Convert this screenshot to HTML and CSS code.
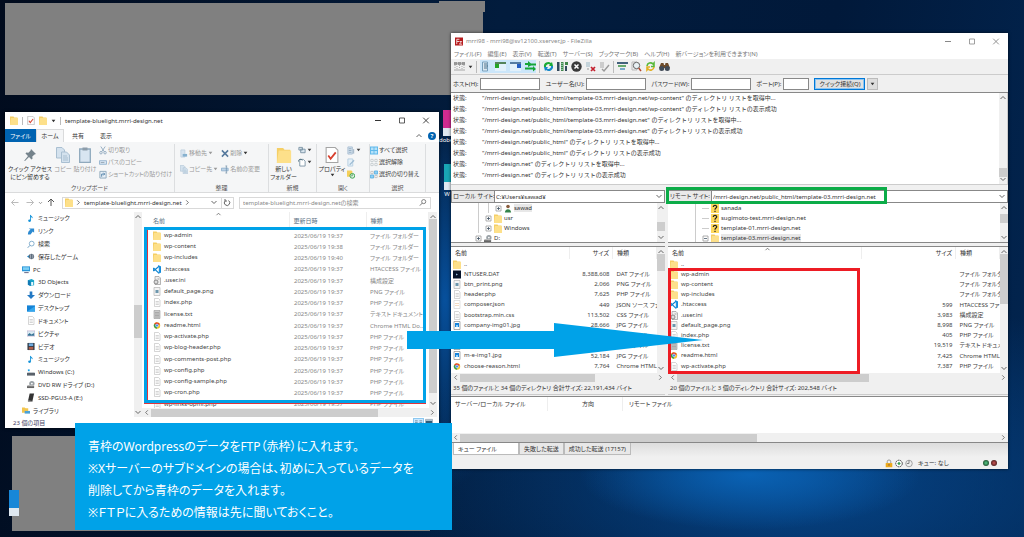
FILE: index.html
```html
<!DOCTYPE html>
<html lang="ja">
<head>
<meta charset="utf-8">
<title>FTP アップロード手順</title>
<link rel="stylesheet" href="styles.css">
</head>
<body>
<svg class="defs" aria-hidden="true">
  <symbol id="folder" viewBox="0 0 8 9"><path d="M0 .5h3.5l.8 1H7.500V9H0z" fill="#f5cf66"/><path d="M1 2h7v7H0z" fill="#fde08a"/></symbol>
  <symbol id="doc" viewBox="0 0 8 9"><path d="M1.500.5h4L7 2v6.500H1.500z" fill="#fff" stroke="#bbb" stroke-width=".6"/><path d="M2.600 3.500h3.200M2.600 5h3.200M2.600 6.500h3.200" stroke="#aaa" stroke-width=".5"/></symbol>
  <symbol id="txt" viewBox="0 0 8 9"><path d="M1 .5h6v8H1z" fill="#c9c9c9" stroke="#999" stroke-width=".6"/><path d="M2 2.500h4M2 4h4M2 5.500h4M2 7h4" stroke="#888" stroke-width=".5"/></symbol>
  <symbol id="png" viewBox="0 0 8 9"><path d="M1 .5h6v8H1z" fill="#f4f4f4" stroke="#aaa" stroke-width=".6"/><path d="M2.500 3h3v3h-3z" fill="#6d97ad"/></symbol>
  <symbol id="jpg" viewBox="0 0 8 9"><path d="M1 .5h6v8H1z" fill="#fff" stroke="#777" stroke-width=".6"/><path d="M2 2h4v4H2z" fill="#1683dc"/><path d="M3 4h2v2H3z" fill="#90d4ff"/></symbol>
  <symbol id="json" viewBox="0 0 8 9"><path d="M1 .5h6v8H1z" fill="#fff" stroke="#ccc" stroke-width=".6"/><path d="M3 3v4M5 3v4" stroke="#e0a468" stroke-width=".8" stroke-dasharray="1"/></symbol>
  <symbol id="ini" viewBox="0 0 8 9"><path d="M2 .5h4L7.500 2v6.500H2z" fill="#eee" stroke="#888" stroke-width=".6"/><circle cx="3" cy="6" r="2" fill="#ddd" stroke="#777" stroke-width=".8"/><path d="M4.500 3h2" stroke="#777" stroke-width=".6"/></symbol>
  <symbol id="code" viewBox="0 0 9 9"><path d="M6.500.5 8.500 1.500v6L6.500 8.500 1 3.200.3 3.800v1.500L1 5.900 6.500 1z" fill="none" stroke="#0b83d0" stroke-width="1.300"/><path d="M6.500.5 8.500 1.500v6L6.500 8.500z" fill="#1e94e4"/></symbol>
  <symbol id="chrome" viewBox="0 0 9 9"><circle cx="4.500" cy="4.500" r="3.600" fill="#f4c430"/><path d="M1.400 2.700A3.600 3.600 0 0 1 7.700 3L4.500 4.500z" fill="#df3e30"/><path d="M1.400 2.700A3.600 3.600 0 0 0 4.500 8.100L5 4.500z" fill="#2f9d50"/><circle cx="4.500" cy="4.500" r="1.600" fill="#4285f4" stroke="#fff" stroke-width=".6"/></symbol>
  <symbol id="dat" viewBox="0 0 8 8"><path d="M0 0h8v8H0z" fill="#06142a"/><path d="m3 3 2 1-2 1z" fill="#9bd"/></symbol>
  <symbol id="music" viewBox="0 0 9 9"><path d="M4 .5v6" stroke="#1191d8" stroke-width="1"/><path d="M4 .3c.5 1.700 3 1.800 2.300 4.200C6 3.500 5 3 4 3z" fill="#1191d8"/><ellipse cx="2.900" cy="7" rx="1.600" ry="1.300" fill="#1191d8"/></symbol>
  <symbol id="link" viewBox="0 0 9 9"><path d="M2 1h6v5L6.500 4.500 4 8H1c0-3 1-4.500 3-5.500z" fill="#2c8ad0"/></symbol>
  <symbol id="search" viewBox="0 0 9 9"><circle cx="5.300" cy="3.500" r="2.700" fill="none" stroke="#6d9fc4" stroke-width=".9"/><path d="M3.300 5.500.8 8.200" stroke="#6d9fc4" stroke-width="1.100"/></symbol>
  <symbol id="find" viewBox="0 0 9 9"><circle cx="5.300" cy="3.500" r="2.300" fill="none" stroke="#555" stroke-width=".8"/><path d="M3.600 5.200 1 8" stroke="#555" stroke-width=".9"/></symbol>
  <symbol id="game" viewBox="0 0 9 9"><path d="M0 4.500 3 2.500v4z" fill="#1b7fc3"/><circle cx="5" cy="4.500" r="3" fill="#5c6c79"/><path d="M4 2v5M6.500 2v5" stroke="#dde" stroke-width=".6"/></symbol>
  <symbol id="pc" viewBox="0 0 9 9"><path d="M0 1h9v5.500H0z" fill="#2994d8"/><path d="M1 2h7v3H1z" fill="#7dd0f5"/><path d="M2.500 8h5" stroke="#557" stroke-width="1"/></symbol>
  <symbol id="cube" viewBox="0 0 9 9"><path d="m1 2 4-1.500L8 2v5.500L4 8.500 1 7z" fill="#18a4c9"/><path d="M1 2 4 3v5.500L1 7z" fill="#1479b4"/><path d="M4.700 4H7v3.500L4.700 8z" fill="#eaf9ff"/></symbol>
  <symbol id="down" viewBox="0 0 9 9"><path d="M3 0h3v4h3L4.500 8.500 0 4h3z" fill="#2379c4"/></symbol>
  <symbol id="desk" viewBox="0 0 9 9"><path d="M0 1h9v7H0z" fill="#1583d6"/><path d="m0 8 9-6v6z" fill="#35a8ee"/></symbol>
  <symbol id="pict" viewBox="0 0 9 9"><path d="M0 1.500h9v6H0z" fill="#dbeaf2" stroke="#859" stroke-width=".3"/><path d="M1 5.500 3 4l2 1.500L8 4v3H1z" fill="#3b7698"/></symbol>
  <symbol id="video" viewBox="0 0 9 9"><path d="M.5.5h8v8h-8z" fill="#333b46"/><path d="M2 1h5v3H2z" fill="#6eaade"/><path d="M2 5h5v3H2z" fill="#ae5d48"/></symbol>
  <symbol id="drive" viewBox="0 0 9 9"><path d="M0 5h9v3H0z" fill="#59616a"/><path d="M1 1h2v2H1z" fill="#19a0ea"/><path d="M1 4h7l1 1H0z" fill="#c3c8cc"/></symbol>
  <symbol id="dvd" viewBox="0 0 9 9"><path d="M0 6h8v2.500H0z" fill="#666"/><circle cx="5.500" cy="3.500" r="3" fill="#9aa1a6"/><circle cx="5.500" cy="3.500" r="1" fill="#fff"/><path d="M1 5h7v1.500H0z" fill="#bbb"/></symbol>
  <symbol id="ssd" viewBox="0 0 9 9"><path d="M3 0h5L6 9H1z" fill="#333"/><path d="m1 8 5 1" stroke="#999"/></symbol>
  <symbol id="lib" viewBox="0 0 9 9"><path d="M0 1h3l1 1h3v5H0z" fill="#f3c64f"/><path d="M3 5h6v3H3z" fill="#4ba2d6"/></symbol>
  <symbol id="pin" viewBox="0 0 12 12"><path d="m7 0 5 5-1.500.4-2.200 2.200.2 2.200-1 .7L5 7.900 1 12l-.8-.3L4 7 1.500 4.500l.7-1 2.200.2L6.600 1.500z" fill="#75838c"/></symbol>
  <symbol id="copy" viewBox="0 0 14 16"><path d="M.5.5H6L8.500 3v8h-8z" fill="#d4e2ee" stroke="#a9bfd1"/><path d="M5.500 5h5L13.500 8v7.500h-8z" fill="#d4e2ee" stroke="#a9bfd1"/><path d="M7 9h4M7 11h5M7 13h5" stroke="#a9bfd1"/></symbol>
  <symbol id="paste" viewBox="0 0 12 16"><path d="M.7 2h10.600v13.300H.7z" fill="#d8e5f1" stroke="#8fa9bd" stroke-width="1.300"/><path d="M3.500.5h5v3h-5z" fill="#8d9daa"/></symbol>
  <symbol id="cut" viewBox="0 0 9 9"><path d="m2 0 4 6M7 0 3 6" stroke="#8fa8bd" stroke-width="1"/><circle cx="2.200" cy="7" r="1.400" fill="none" stroke="#8fa8bd"/><circle cx="6.800" cy="7" r="1.400" fill="none" stroke="#8fa8bd"/></symbol>
  <symbol id="path" viewBox="0 0 9 9"><path d="M.5 2.500h8v4h-8z" fill="#dbe8f3" stroke="#8fb0cc"/><path d="m2 5 1-1 1 1 1-1 1 1" stroke="#567" stroke-width=".6" fill="none"/></symbol>
  <symbol id="short" viewBox="0 0 9 9"><path d="M1 1h7v7.500H1z" fill="#e8f0f7" stroke="#8ba5b9"/><path d="M3 7V4h3M5 2.500 6.500 4 5 5.500" stroke="#4c7da5" fill="none"/></symbol>
  <symbol id="move" viewBox="0 0 9 9"><path d="M1 .5h4.500v8H1z" fill="#d8e4ef" stroke="#c2d2e0"/><path d="M3 5h5v3H3z" fill="#86b1cf"/></symbol>
  <symbol id="del" viewBox="0 0 9 9"><path d="m1 1 7 7M8 1 1 8" stroke="#56799d" stroke-width="1.700"/></symbol>
  <symbol id="ren" viewBox="0 0 9 9"><path d="M.5 3h7.500v3H.5z" fill="#bed4e8" stroke="#8fb0cc"/><path d="M6 .5v8M5 .5h2M5 8.500h2" stroke="#64859f" stroke-width=".7"/></symbol>
  <symbol id="newitem" viewBox="0 0 9 9"><path d="M1 1h4v3H1zM3 3h5v4H3z" fill="#d9e5ee" stroke="#7890a2"/></symbol>
  <symbol id="easy" viewBox="0 0 9 9"><path d="M2 1h4l2 2v5.500H2z" fill="#fff" stroke="#7890a2"/><path d="M0 4c0-3 3-4 5-2" fill="none" stroke="#467"/></symbol>
  <symbol id="check" viewBox="0 0 12 15"><path d="M.5.5H9L11.500 3v11.500H.5z" fill="#fff" stroke="#a4a4a4"/><path d="m2.500 8 2.200 3L9.500 5" fill="none" stroke="#d8402e" stroke-width="1.700"/></symbol>
  <symbol id="open" viewBox="0 0 9 9"><path d="M1 .5h5v8H1z" fill="#d5e3ef" stroke="#a8bed2"/><path d="M2 2.500h3M2 4.500h3M2 6.500h3M7.500 3v5" stroke="#8fa8bd"/></symbol>
  <symbol id="edit" viewBox="0 0 9 9"><path d="M1 .5h5.500v8H1z" fill="#e5f0f8" stroke="#b5cde0"/><path d="m3 7 5-5" stroke="#9dbbd3" stroke-width="1.300"/></symbol>
  <symbol id="hist" viewBox="0 0 9 9"><path d="M0 0h5l1 1v6H0z" fill="#f5cf5a"/><circle cx="6" cy="6" r="2.700" fill="#dbefdc" stroke="#34a04a"/><path d="M6 4v2H4.500" stroke="#274" stroke-width=".6" fill="none"/></symbol>
  <symbol id="selall" viewBox="0 0 9 9"><path d="M0 0h9v9H0z" fill="#5fb8ea"/><path d="M1 1h3v3H1zM5 1h3v3H5zM1 5h3v3H1zM5 5h3v3H5z" fill="#b5e2fa"/></symbol>
  <symbol id="selnone" viewBox="0 0 9 9"><path d="M1 1h2.500v2.500H1zM5.500 1H8v2.500H5.500zM1 5.500h2.500V8H1zM5.500 5.500H8V8H5.500z" fill="#fff" stroke="#b9bfc4" stroke-width=".8"/></symbol>
  <symbol id="selinv" viewBox="0 0 9 9"><path d="M5 .5h3.500V4H5zM.5 5H4v3.500H.5z" fill="#8fd0f4" stroke="#49a7df" stroke-width=".8"/><path d="M1 1h2.500v2.500H1zM5.500 5.500H8V8H5.500z" fill="#fff" stroke="#aaa" stroke-width=".7"/></symbol>
  <symbol id="up" viewBox="0 0 8 5"><path d="m1.500 4 2.500-2.500L6.500 4" fill="none" stroke="#666"/></symbol>
  <symbol id="dn" viewBox="0 0 8 5"><path d="m1.500 1 2.500 2.500L6.500 1" fill="none" stroke="#666"/></symbol>
  <symbol id="lf" viewBox="0 0 5 8"><path d="M4 1.500 1.500 4 4 6.500" fill="none" stroke="#666"/></symbol>
  <symbol id="rt" viewBox="0 0 5 8"><path d="M1 1.500 3.500 4 1 6.500" fill="none" stroke="#666"/></symbol>
  <symbol id="arl" viewBox="0 0 8 8"><path d="M7.500 4h-7M3.500 1 .5 4l3 3" fill="none" stroke="currentColor"/></symbol>
  <symbol id="arr" viewBox="0 0 8 8"><path d="M.5 4h7M4.500 1l3 3-3 3" fill="none" stroke="currentColor"/></symbol>
  <symbol id="aru" viewBox="0 0 8 8"><path d="M4 7.500v-7M1 3.500l3-3 3 3" fill="none" stroke="#555"/></symbol>
  <symbol id="reload" viewBox="0 0 8 8"><path d="M5.500 2A2.700 2.700 0 1 1 2 2.500M2 .5v2h2" fill="none" stroke="#555" stroke-width=".9"/></symbol>
  <symbol id="min" viewBox="0 0 8 8"><path d="M1 4h6" stroke="currentColor"/></symbol>
  <symbol id="max" viewBox="0 0 8 8"><path d="M1.500 1.500h5v5h-5z" fill="none" stroke="currentColor" stroke-width=".8"/></symbol>
  <symbol id="close" viewBox="0 0 8 8"><path d="m1.200 1.200 5.600 5.600M6.800 1.200 1.200 6.800" stroke="currentColor" stroke-width=".9"/></symbol>
  <symbol id="tri" viewBox="0 0 6 4"><path d="M.8.5h4.400L3 3.500z" fill="currentColor"/></symbol>
  <symbol id="fz" viewBox="0 0 9 9"><path d="M0 0h9v9H0z" fill="#b5191b"/><path d="M2 7.500V2h3M2 4.500h2.500M5 4.500h2.500L5 7.500h3" fill="none" stroke="#fff" stroke-width=".9"/></symbol>
  <symbol id="site" viewBox="0 0 11 11"><path d="M0 1.500h3v2H0zM4 1.500h3v2H4zM8 1.500h3v2H8zM0 9h11" fill="#999" stroke="#888" stroke-width=".7"/><path d="M1 4v4M3 5v3M5.500 4v4M8 5v3M10 4v4" stroke="#aaa" stroke-dasharray="1"/></symbol>
  <symbol id="tlog" viewBox="0 0 11 11"><path d="M2.500 1h5v9h-5z" fill="#dbe8f1" stroke="#78a0bc"/><path d="M4 3h3M4 5h4M4 7h3" stroke="#4f758e"/></symbol>
  <symbol id="tlocal" viewBox="0 0 11 11"><path d="M0 1h11v9H0z" fill="#e2f1fb"/><path d="M0 1h11v2H0z" fill="#54835a"/><path d="M0 3h4v4H0z" fill="#24a527"/></symbol>
  <symbol id="tremote" viewBox="0 0 11 11"><path d="M0 1h11v9H0z" fill="#e2f1fb"/><path d="M0 1h11v2H0z" fill="#567da2"/><path d="M7 3h4v4H7z" fill="#245fc4"/></symbol>
  <symbol id="tqueue" viewBox="0 0 11 11"><path d="M3 0v2H0v2h3v2l3-1.500h5v-2H6zM8 5v1.500H0v2h8v2L11 8z" fill="#16a637"/></symbol>
  <symbol id="tref" viewBox="0 0 11 11"><path d="M1 6a4.300 4.300 0 0 1 7-4l1-1 1 4H6l1-1.400A2.500 2.500 0 0 0 3 6z" fill="#1cab36"/><path d="M10 5a4.300 4.300 0 0 1-7 4l-1 1-1-4h4L4 7.400A2.500 2.500 0 0 0 8 5z" fill="#1688c9"/></symbol>
  <symbol id="tproc" viewBox="0 0 11 11"><path d="M0 1h2.500v9H0zM8 5h2v5H8z" fill="#31495b"/><path d="M4 1h2.500v9H4zM8 1h3v3H8z" fill="#41864a"/><path d="M5 2v7" stroke="#cfe" stroke-dasharray="1"/></symbol>
  <symbol id="tcancel" viewBox="0 0 11 11"><circle cx="5.500" cy="5.500" r="5.200" fill="#3a3a3a"/><path d="m3.500 3.500 4 4M7.500 3.500l-4 4" stroke="#fff" stroke-width="1.500"/></symbol>
  <symbol id="tdisc" viewBox="0 0 11 11"><path d="M1 1h4v5H1z" fill="#c5d4db"/><path d="M2 8h2" stroke="#999"/><path d="m6 6 4 4M10 6l-4 4" stroke="#c3202e" stroke-width="1.700"/></symbol>
  <symbol id="trecon" viewBox="0 0 11 11"><path d="M1 1h4v6H1z" fill="#ccc"/><path d="m3 8 2 2 5-6" fill="none" stroke="#999" stroke-width="1.400"/></symbol>
  <symbol id="tfilter" viewBox="0 0 11 11"><path d="M0 1h11v2H0z" fill="#43617c"/><path d="M1 4h8v2H1z" fill="#66a96d"/><path d="M3 7h5v2H3z" fill="#79a9c9"/></symbol>
  <symbol id="tcomp" viewBox="0 0 11 11"><path d="M1 1h5v8H1z" fill="#eee" stroke="#bbb"/><circle cx="5.500" cy="4.500" r="3.200" fill="#e8f0f3" stroke="#666"/><path d="m7.700 7 2.300 3" stroke="#b4492f" stroke-width="1.500"/></symbol>
  <symbol id="tsync" viewBox="0 0 11 11"><path d="M2 5a3.500 3.500 0 0 1 6-2l1-1v3.500H6" fill="none" stroke="#59b93a" stroke-width="1.600"/><path d="M9 6a3.500 3.500 0 0 1-6 2L2 9V6h3" fill="none" stroke="#e1af21" stroke-width="1.600"/></symbol>
  <symbol id="tbin" viewBox="0 0 11 11"><path d="M2 2h2.500l.5 2h1l.5-2H9l2 5H0z" fill="#6d4b2a"/><circle cx="2.700" cy="7.500" r="2.500" fill="#414b57"/><circle cx="8.300" cy="7.500" r="2.500" fill="#414b57"/></symbol>
  <symbol id="user" viewBox="0 0 9 9"><circle cx="4.500" cy="2.300" r="2" fill="#8a5d3e"/><path d="M1 9c0-5 7-5 7 0z" fill="#35844b"/></symbol>
  <symbol id="what" viewBox="0 0 8 9"><path d="M0 0h8v9H0z" fill="#ffd95c"/><path d="M2.300 3c0-2.300 3.700-2 3.400 0C5.600 4.200 4 4 4 5.700M4 6.700v1.200" fill="none" stroke="#222" stroke-width="1.200"/></symbol>
  <symbol id="plus" viewBox="0 0 7 7"><path d="M1 1h5v5H1z" fill="#fff" stroke="#999" stroke-width=".8"/><path d="M2 3.500h3M3.500 2v3" stroke="#456" stroke-width=".8"/></symbol>
  <symbol id="minus" viewBox="0 0 7 7"><path d="M1 1h5v5H1z" fill="#fff" stroke="#999" stroke-width=".8"/><path d="M2 3.500h3" stroke="#456" stroke-width=".8"/></symbol>
  <symbol id="lock" viewBox="0 0 9 9"><path d="M2.500 4V2.500a2 2 0 0 1 4 0V4" fill="none" stroke="#999" stroke-width="1.100"/><path d="M.8 4h7.400v4.700H.8z" fill="#eda918"/><path d="M4.500 5v2" stroke="#755"/></symbol>
  <symbol id="gear" viewBox="0 0 9 9"><circle cx="4.500" cy="4.500" r="3.700" fill="#fff" stroke="#333" stroke-width="1" stroke-dasharray="2 .6"/><path d="m2.500 4.500 2-2 2 2-2 2z" fill="#3a9c50"/></symbol>
  <symbol id="clock" viewBox="0 0 9 9"><circle cx="4.500" cy="4.500" r="3.700" fill="#eee" stroke="#999"/><path d="M4.500 1v3.500H2" fill="none" stroke="#777"/></symbol>
  <symbol id="vlist" viewBox="0 0 9 8"><path d="M0 1h3M0 3h3M0 5h3M0 7h3M5 1h3M5 3h3M5 5h3M5 7h3" stroke="#53788d" stroke-width=".8"/></symbol>
  <symbol id="vbig" viewBox="0 0 9 8"><path d="M.5.5h8v7h-8z" fill="#d6e5ed" stroke="#9ab"/><path d="M1 2h7v3H1z" fill="#315d7a"/></symbol>
</svg>

<main class="desktop">
  <div class="mask mask-top"></div>
  <div class="mask mask-bump"></div>
  <div class="mask mask-bottom"></div>
  <div class="shortcut adobe"><span class="tile pink"></span><span>dobe</span></div>
  <div class="shortcut web"><span class="tile teal"></span><span>W</span></div>
  <div class="shortcut edge-icon"><span class="tile blue"></span></div>

  <section class="window explorer" aria-label="エクスプローラー">
    <header class="ex-title">
      <svg class="i8"><use href="#folder"/></svg><i class="bar"></i>
      <svg class="i8"><use href="#check"/></svg>
      <svg class="i8"><use href="#folder"/></svg>
      <svg class="caret"><use href="#tri"/></svg><i class="bar"></i>
      <span>template-bluelight.mrri-design.net</span>
      <div class="controls"><button aria-label="最小化"><svg class="i8"><use href="#min"/></svg></button><button aria-label="最大化"><svg class="i8"><use href="#max"/></svg></button><button aria-label="閉じる"><svg class="i8"><use href="#close"/></svg></button></div>
    </header>
    <nav class="ex-tabs">
      <button class="file">ファイル</button><button class="on">ホーム</button><button>共有</button><button>表示</button>
      <div class="tab-end"><svg class="chev"><use href="#up"/></svg><button class="help" aria-label="ヘルプ">?</button></div>
    </nav>
    <div class="ribbon">
      <div class="group g-clip">
        <div class="tools">
          <button class="big w-pin"><svg class="i12"><use href="#pin"/></svg>クイック アクセス<br>にピン留めする</button>
          <button class="big dim w-copy"><svg class="i16"><use href="#copy"/></svg>コピー</button>
          <button class="big dim w-paste"><svg class="i16"><use href="#paste"/></svg>貼り付け</button>
          <div class="stack dim"><button><svg class="i8"><use href="#cut"/></svg>切り取り</button><button><svg class="i8"><use href="#path"/></svg>パスのコピー</button><button><svg class="i8"><use href="#short"/></svg>ショートカットの貼り付け</button></div>
        </div><div class="label">クリップボード</div>
      </div>
      <div class="group g-org">
        <div class="tools two">
          <div class="stack dim"><button><svg class="i8"><use href="#move"/></svg>移動先<svg class="caret"><use href="#tri"/></svg></button><button><svg class="i8"><use href="#copy"/></svg>コピー先<svg class="caret"><use href="#tri"/></svg></button></div>
          <div class="stack dim"><button><svg class="i8"><use href="#del"/></svg>削除<svg class="caret dark"><use href="#tri"/></svg></button><button><svg class="i8"><use href="#ren"/></svg>名前の変更</button></div>
        </div><div class="label">整理</div>
      </div>
      <div class="group g-new">
        <div class="tools"><button class="big w-new"><svg class="i16"><use href="#folder"/></svg>新しい<br>フォルダー</button>
          <div class="stack"><button aria-label="新しいアイテム"><svg class="i8"><use href="#newitem"/></svg><svg class="caret"><use href="#tri"/></svg></button><button aria-label="ショートカット"><svg class="i8"><use href="#easy"/></svg><svg class="caret"><use href="#tri"/></svg></button></div>
        </div><div class="label">新規</div>
      </div>
      <div class="group g-open">
        <div class="tools"><button class="big w-prop"><svg class="i16"><use href="#check"/></svg>プロパティ<svg class="caret"><use href="#tri"/></svg></button>
          <div class="stack"><button class="dim" aria-label="開く"><svg class="i8"><use href="#open"/></svg><svg class="caret"><use href="#tri"/></svg></button><button aria-label="編集"><svg class="i8"><use href="#edit"/></svg></button><button aria-label="履歴"><svg class="i8"><use href="#hist"/></svg></button></div>
        </div><div class="label">開く</div>
      </div>
      <div class="group g-sel">
        <div class="tools"><div class="stack"><button><svg class="i8"><use href="#selall"/></svg>すべて選択</button><button><svg class="i8"><use href="#selnone"/></svg>選択解除</button><button><svg class="i8"><use href="#selinv"/></svg>選択の切り替え</button></div></div>
        <div class="label">選択</div>
      </div>
    </div>
    <div class="address">
      <div class="hist"><svg class="i8"><use href="#arl"/></svg><svg class="i8"><use href="#arr"/></svg><svg class="caret"><use href="#dn"/></svg><svg class="i8 dark"><use href="#aru"/></svg></div>
      <div class="path"><svg class="i8"><use href="#folder"/></svg><svg class="side"><use href="#rt"/></svg><span>template-bluelight.mrri-design.net</span><svg class="side"><use href="#rt"/></svg><svg class="chev push"><use href="#dn"/></svg><button class="reload" aria-label="更新"><svg class="i8"><use href="#reload"/></svg></button></div>
      <label class="find"><input aria-label="検索" placeholder="template-bluelight.mrri-design.netの検索"><svg class="i8"><use href="#find"/></svg></label>
    </div>
    <div class="ex-body">
      <ul class="tree">
        <li><svg class="i8"><use href="#music"/></svg>ミュージック</li>
        <li><svg class="i8"><use href="#link"/></svg>リンク</li>
        <li><svg class="i8"><use href="#search"/></svg>検索</li>
        <li><svg class="i8"><use href="#game"/></svg>保存したゲーム</li>
        <li class="root"><svg class="i8"><use href="#pc"/></svg>PC</li>
        <li><svg class="i8"><use href="#cube"/></svg>3D Objects</li>
        <li><svg class="i8"><use href="#down"/></svg>ダウンロード</li>
        <li><svg class="i8"><use href="#desk"/></svg>デスクトップ</li>
        <li><svg class="i8"><use href="#doc"/></svg>ドキュメント</li>
        <li><svg class="i8"><use href="#pict"/></svg>ピクチャ</li>
        <li><svg class="i8"><use href="#video"/></svg>ビデオ</li>
        <li><svg class="i8"><use href="#music"/></svg>ミュージック</li>
        <li><svg class="i8"><use href="#drive"/></svg>Windows (C:)</li>
        <li><svg class="i8"><use href="#dvd"/></svg>DVD RW ドライブ (D:)</li>
        <li><svg class="i8"><use href="#ssd"/></svg>SSD-PGU3-A (E:)</li>
        <li class="root"><svg class="i8"><use href="#lib"/></svg>ライブラリ</li>
      </ul>
      <div class="vbar nav-bar"><svg><use href="#up"/></svg><i></i><svg><use href="#dn"/></svg></div>
      <div class="pane">
        <div class="listing">
          <div class="clip">
          <table class="files">
            <colgroup><col class="c-name"><col class="c-date"><col></colgroup>
            <thead><tr><th>名前<svg class="sort"><use href="#up"/></svg></th><th>更新日時</th><th>種類</th></tr></thead>
            <tbody>
            <tr><td><svg class="i8"><use href="#folder"/></svg>wp-admin</td><td>2025/06/19 19:37</td><td>ファイル フォルダー</td></tr>
            <tr><td><svg class="i8"><use href="#folder"/></svg>wp-content</td><td>2025/06/19 19:38</td><td>ファイル フォルダー</td></tr>
            <tr><td><svg class="i8"><use href="#folder"/></svg>wp-includes</td><td>2025/06/19 19:40</td><td>ファイル フォルダー</td></tr>
            <tr><td><svg class="i8"><use href="#code"/></svg>.htaccess</td><td>2025/06/19 19:37</td><td>HTACCESS ファイル</td></tr>
            <tr><td><svg class="i8"><use href="#ini"/></svg>.user.ini</td><td>2025/06/19 19:37</td><td>構成設定</td></tr>
            <tr><td><svg class="i8"><use href="#png"/></svg>default_page.png</td><td>2025/06/19 19:37</td><td>PNG ファイル</td></tr>
            <tr><td><svg class="i8"><use href="#doc"/></svg>index.php</td><td>2025/06/19 19:37</td><td>PHP ファイル</td></tr>
            <tr><td><svg class="i8"><use href="#txt"/></svg>license.txt</td><td>2025/06/19 19:37</td><td>テキスト ドキュメント</td></tr>
            <tr><td><svg class="i8"><use href="#chrome"/></svg>readme.html</td><td>2025/06/19 19:37</td><td>Chrome HTML Do...</td></tr>
            <tr><td><svg class="i8"><use href="#doc"/></svg>wp-activate.php</td><td>2025/06/19 19:37</td><td>PHP ファイル</td></tr>
            <tr><td><svg class="i8"><use href="#doc"/></svg>wp-blog-header.php</td><td>2025/06/19 19:37</td><td>PHP ファイル</td></tr>
            <tr><td><svg class="i8"><use href="#doc"/></svg>wp-comments-post.php</td><td>2025/06/19 19:37</td><td>PHP ファイル</td></tr>
            <tr><td><svg class="i8"><use href="#doc"/></svg>wp-config.php</td><td>2025/06/19 19:37</td><td>PHP ファイル</td></tr>
            <tr><td><svg class="i8"><use href="#doc"/></svg>wp-config-sample.php</td><td>2025/06/19 19:37</td><td>PHP ファイル</td></tr>
            <tr><td><svg class="i8"><use href="#doc"/></svg>wp-cron.php</td><td>2025/06/19 19:37</td><td>PHP ファイル</td></tr>
            <tr><td><svg class="i8"><use href="#doc"/></svg>wp-links-opml.php</td><td>2025/06/19 19:37</td><td>PHP ファイル</td></tr>
            </tbody>
          </table>
          </div>
          <div class="vbar list-bar"><svg><use href="#up"/></svg><i></i><svg><use href="#dn"/></svg></div>
        </div>
        <div class="hbar ex-h"><svg><use href="#lf"/></svg><i></i><svg><use href="#rt"/></svg></div>
      </div>
    </div>
    <footer class="ex-foot"><span>23 個の項目</span><button class="view on" aria-label="詳細"><svg class="i8"><use href="#vlist"/></svg></button><button class="view" aria-label="大アイコン"><svg class="i8"><use href="#vbig"/></svg></button></footer>
  </section>

  <section class="window zilla" aria-label="FileZilla">
    <header class="fz-title"><svg class="i8"><use href="#fz"/></svg><span>mrri98 - mrri98@sv12100.xserver.jp - FileZilla</span>
      <div class="controls"><button aria-label="最小化"><svg class="i8"><use href="#min"/></svg></button><button aria-label="最大化"><svg class="i8"><use href="#max"/></svg></button><button aria-label="閉じる"><svg class="i8"><use href="#close"/></svg></button></div></header>
    <nav class="menu"><button>ファイル(F)</button><button>編集(E)</button><button>表示(V)</button><button>転送(T)</button><button>サーバー(S)</button><button>ブックマーク(B)</button><button>ヘルプ(H)</button><button>新バージョンを利用できます!(N)</button></nav>
    <div class="toolbar">
      <button aria-label="サイト"><svg><use href="#site"/></svg></button><svg class="caret"><use href="#tri"/></svg><i class="bar"></i>
      <div class="pressed"><button aria-label="ログ"><svg><use href="#tlog"/></svg></button><button aria-label="ローカル"><svg><use href="#tlocal"/></svg></button><button aria-label="リモート"><svg><use href="#tremote"/></svg></button><button aria-label="キュー"><svg><use href="#tqueue"/></svg></button></div><i class="bar"></i>
      <button aria-label="更新"><svg><use href="#tref"/></svg></button><button aria-label="処理"><svg><use href="#tproc"/></svg></button><button aria-label="中止"><svg><use href="#tcancel"/></svg></button><button aria-label="切断"><svg><use href="#tdisc"/></svg></button><button aria-label="再接続"><svg><use href="#trecon"/></svg></button><i class="bar"></i>
      <button aria-label="フィルター"><svg><use href="#tfilter"/></svg></button><button aria-label="比較"><svg><use href="#tcomp"/></svg></button><button aria-label="同期"><svg><use href="#tsync"/></svg></button><button aria-label="検索"><svg><use href="#tbin"/></svg></button>
    </div>
    <form class="quick">
      <label for="h">ホスト(H):</label><input id="h" class="wide"><label for="u">ユーザー名(U):</label><input id="u" class="wide"><label for="p">パスワード(W):</label><input id="p" type="password" class="wide"><label for="o">ポート(P):</label><input id="o" class="port">
      <button type="button" class="go">クイック接続(Q)</button><button type="button" class="drop" aria-label="履歴"><svg class="caret"><use href="#tri"/></svg></button>
    </form>
    <div class="log">
      <dl>
        <dt>状態:</dt><dd>"/mrri-design.net/public_html/template-03.mrri-design.net/wp-content" <b>のディレクトリ リストを取得中...</b></dd>
        <dt>状態:</dt><dd>"/mrri-design.net/public_html/template-03.mrri-design.net/wp-content" <b>のディレクトリ リストの表示成功</b></dd>
        <dt>状態:</dt><dd>"/mrri-design.net/public_html/template-03.mrri-design.net" <b>のディレクトリ リストを取得中...</b></dd>
        <dt>状態:</dt><dd>"/mrri-design.net/public_html/template-03.mrri-design.net" <b>のディレクトリ リストの表示成功</b></dd>
        <dt>状態:</dt><dd>"/mrri-design.net/public_html" <b>のディレクトリ リストを取得中...</b></dd>
        <dt>状態:</dt><dd>"/mrri-design.net/public_html" <b>のディレクトリ リストの表示成功</b></dd>
        <dt>状態:</dt><dd>"/mrri-design.net" <b>のディレクトリ リストを取得中...</b></dd>
        <dt>状態:</dt><dd>"/mrri-design.net" <b>のディレクトリ リストの表示成功</b></dd>
      </dl>
      <div class="vbar log-bar"><svg><use href="#up"/></svg><i></i><svg><use href="#dn"/></svg></div>
    </div>
    <div class="split">
      <div class="side-pane local">
        <div class="site"><label for="ls">ローカル サイト:</label><input id="ls" value="C:¥Users¥sawad¥"><svg class="chev"><use href="#dn"/></svg></div>
        <div class="dirs"><ul>
          <li class="d3"><svg class="pm"><use href="#plus"/></svg><svg class="i8"><use href="#user"/></svg><span class="sel">sawad</span></li>
          <li class="d2"><svg class="pm"><use href="#plus"/></svg><svg class="i8"><use href="#folder"/></svg><span>usr</span></li>
          <li class="d2"><svg class="pm"><use href="#plus"/></svg><svg class="i8"><use href="#folder"/></svg><span>Windows</span></li>
          <li class="d1"><svg class="pm"><use href="#plus"/></svg><svg class="i8"><use href="#dvd"/></svg><span>D:</span></li>
        </ul><div class="vbar dir-bar"><svg><use href="#up"/></svg><i></i><svg><use href="#dn"/></svg></div></div>
        <div class="box">
          <div class="listing"><div class="clip"><table class="ftp">
            <colgroup><col><col class="c-size"><col class="c-type"></colgroup>
            <thead><tr><th>名前</th><th>サイズ</th><th>種類</th></tr></thead>
            <tbody>
            <tr><td><svg class="i8"><use href="#folder"/></svg>..</td><td></td><td></td></tr>
            <tr><td><svg class="i8"><use href="#dat"/></svg>NTUSER.DAT</td><td>8,388,608</td><td>DAT ファイル</td></tr>
            <tr><td><svg class="i8"><use href="#png"/></svg>btn_print.png</td><td>2,066</td><td>PNG ファイル</td></tr>
            <tr><td><svg class="i8"><use href="#doc"/></svg>header.php</td><td>7,625</td><td>PHP ファイル</td></tr>
            <tr><td><svg class="i8"><use href="#json"/></svg>composer.json</td><td>449</td><td>JSON ソース ファ</td></tr>
            <tr><td><svg class="i8"><use href="#doc"/></svg>bootstrap.min.css</td><td>113,502</td><td>CSS ファイル</td></tr>
            <tr><td><svg class="i8"><use href="#jpg"/></svg>company-img01.jpg</td><td>28,666</td><td>JPG ファイル</td></tr>
            <tr><td><svg class="i8"><use href="#jpg"/></svg>company-img02.jpg</td><td>28,120</td><td>JPG ファイル</td></tr>
            <tr><td><svg class="i8"><use href="#jpg"/></svg>company-img03.jpg</td><td>30,412</td><td>JPG ファイル</td></tr>
            <tr><td><svg class="i8"><use href="#jpg"/></svg>m-e-img1.jpg</td><td>52,184</td><td>JPG ファイル</td></tr>
            <tr><td><svg class="i8"><use href="#chrome"/></svg>choose-reason.html</td><td>7,764</td><td>Chrome HTML</td></tr>
            </tbody></table></div>
            <div class="vbar l-bar"><svg><use href="#up"/></svg><i></i><svg><use href="#dn"/></svg></div></div>
          <div class="hbar l-h"><svg><use href="#lf"/></svg><i></i><svg><use href="#rt"/></svg></div>
        </div>
        <div class="sum">35 個のファイルと 34 個のディレクトリ 合計サイズ: 22,191,434 バイト</div>
      </div>
      <div class="side-pane remote">
        <div class="site"><label for="rs">リモート サイト:</label><input id="rs" value="/mrri-design.net/public_html/template-03.mrri-design.net"><svg class="chev"><use href="#dn"/></svg></div>
        <div class="dirs"><ul>
          <li class="d2"><i class="pm"></i><svg class="i8"><use href="#what"/></svg><span>sanada</span></li>
          <li class="d2"><i class="pm"></i><svg class="i8"><use href="#what"/></svg><span>sugimoto-test.mrri-design.net</span></li>
          <li class="d2"><i class="pm"></i><svg class="i8"><use href="#what"/></svg><span>template-01.mrri-design.net</span></li>
          <li class="d2"><svg class="pm"><use href="#minus"/></svg><svg class="i8"><use href="#folder"/></svg><span class="sel">template-03.mrri-design.net</span></li>
        </ul><div class="vbar rdir-bar"><svg><use href="#up"/></svg><i></i><svg><use href="#dn"/></svg></div></div>
        <div class="box">
          <div class="listing"><div class="clip"><table class="ftp">
            <colgroup><col class="c-rname"><col><col class="c-type"></colgroup>
            <thead><tr><th>名前<svg class="sort"><use href="#up"/></svg></th><th>サイズ</th><th>種類</th></tr></thead>
            <tbody>
            <tr><td><svg class="i8"><use href="#folder"/></svg>..</td><td></td><td></td></tr>
            <tr><td><svg class="i8"><use href="#folder"/></svg>wp-admin</td><td></td><td>ファイル フォルダー</td></tr>
            <tr><td><svg class="i8"><use href="#folder"/></svg>wp-content</td><td></td><td>ファイル フォルダー</td></tr>
            <tr><td><svg class="i8"><use href="#folder"/></svg>wp-includes</td><td></td><td>ファイル フォルダー</td></tr>
            <tr><td><svg class="i8"><use href="#code"/></svg>.htaccess</td><td>599</td><td>HTACCESS ファ</td></tr>
            <tr><td><svg class="i8"><use href="#ini"/></svg>.user.ini</td><td>3,983</td><td>構成設定</td></tr>
            <tr><td><svg class="i8"><use href="#png"/></svg>default_page.png</td><td>8,998</td><td>PNG ファイル</td></tr>
            <tr><td><svg class="i8"><use href="#doc"/></svg>index.php</td><td>405</td><td>PHP ファイル</td></tr>
            <tr><td><svg class="i8"><use href="#txt"/></svg>license.txt</td><td>19,519</td><td>テキスト ドキュメン</td></tr>
            <tr><td><svg class="i8"><use href="#chrome"/></svg>readme.html</td><td>7,425</td><td>Chrome HTML</td></tr>
            <tr><td><svg class="i8"><use href="#doc"/></svg>wp-activate.php</td><td>7,387</td><td>PHP ファイル</td></tr>
            </tbody></table></div>
            <div class="vbar r-bar"><svg><use href="#up"/></svg><i></i><svg><use href="#dn"/></svg></div></div>
          <div class="hbar r-h"><svg><use href="#lf"/></svg><i></i><svg><use href="#rt"/></svg></div>
        </div>
        <div class="sum">20 個のファイルと 3 個のディレクトリ 合計サイズ: 202,548 バイト</div>
      </div>
    </div>
    <div class="queue">
      <div class="q-head"><span class="q1">サーバー/ローカル ファイル</span><span class="q2">方向</span><span>リモート ファイル</span></div>
      <div class="hbar q-h"><svg><use href="#lf"/></svg><i></i><svg><use href="#rt"/></svg></div>
    </div>
    <div class="q-tabs"><button class="on">キュー ファイル</button><button>失敗した転送</button><button>成功した転送 (17157)</button></div>
    <footer class="fz-foot"><svg class="i8"><use href="#lock"/></svg><svg class="i8"><use href="#gear"/></svg><svg class="i8"><use href="#clock"/></svg><span>キュー: なし</span><i class="led green"></i><i class="led red"></i></footer>
  </section>

  <div class="frame frame-blue"></div>
  <div class="frame frame-green"></div>
  <div class="frame frame-red"></div>
  <svg class="arrow" viewBox="0 0 296 34"><path d="M0 8h147V0l149 17-149 17v-8H0z" fill="#00a2e8"/></svg>
  <aside class="note"><p>青枠のWordpressのデータをFTP（赤枠）に入れます。</p><p>※Xサーバーのサブドメインの場合は、初めに入っているデータを</p><p>削除してから青枠のデータを入れます。</p><p>※ＦＴＰに入るための情報は先に聞いておくこと。</p></aside>
</main>
</body>
</html>
```
FILE: styles.css
```css
* { box-sizing: border-box; }
body { margin: 0; font: 6px/8px "Noto Sans", "Noto Sans CJK JP", sans-serif; font-feature-settings: "palt"; color: #333; }
button, input { font: inherit; font-feature-settings: inherit; color: inherit; margin: 0; padding: 0; border: 0; background: none; border-radius: 0; min-width: 0; white-space: nowrap; }
ul, dl, dd, p { margin: 0; padding: 0; list-style: none; }
svg { display: block; flex: none; }
.defs { display: none; }
.i8 { width: 8px; height: 9px; }
.i12 { width: 12px; height: 12px; }
.i16 { width: 16px; height: 16px; }
.caret { width: 5px; height: 4px; }
.chev { width: 8px; height: 5px; }
.side { width: 5px; height: 7px; }
.bar { width: 1px; height: 8px; background: #bbb; }

.desktop { position: relative; min-height: 100vh; overflow: hidden;
  background:
    radial-gradient(ellipse 170px 55px at 750px 475px, #0a62b4 0%, #0a62b400 100%),
    radial-gradient(ellipse 420px 190px at 800px 480px, #06468a 0%, #06468a00 100%),
    radial-gradient(ellipse 70px 190px at 445px 300px, #07509c 0%, #07509c00 100%),
    linear-gradient(100deg, #010b1d 0%, #021c3d 45%, #01193a 75%, #022550 100%); }
.mask { position: absolute; background: #808080; }
.mask-top { left: 5px; top: 3px; width: 478px; height: 92px; }
.mask-bump { left: 439px; top: 1px; width: 46px; height: 11px; }
.mask-bottom { left: 12px; top: 436px; width: 418px; height: 95px; }
.shortcut { position: absolute; color: #fff; }
.tile { display: block; width: 10px; height: 26px; margin-left: 4px; border-bottom: 8px solid #dfe8f0; }
.pink { background: #cf2b90; }
.teal { background: #19a6b5; }
.blue { background: #1787d8; }
.adobe { left: 439px; top: 110px; }
.web { left: 440px; top: 164px; text-align: center; }
.edge-icon { left: 5px; top: 490px; }

.window { position: absolute; display: flex; flex-direction: column; background: #fff; box-shadow: 0 0 3px #000a; }
.controls { margin-left: auto; display: flex; gap: 16px; }

/* Explorer */
.explorer { left: 5px; top: 112px; width: 434px; }
.ex-title { display: flex; align-items: center; gap: 4px; height: 17px; padding: 0 9px 0 5px; color: #333; }
.ex-tabs { display: flex; height: 13px; align-items: stretch; }
.ex-tabs button { width: 28px; border: 1px solid transparent; text-align: center; }
.ex-tabs .file { width: 31px; background: #0063b1; color: #fff; }
.ex-tabs .on { background: #f5f6f7; border-color: #dadbdc; border-bottom: 0; }
.tab-end { margin-left: auto; display: flex; align-items: center; gap: 5px; padding-right: 3px; }
.ex-tabs .help { width: 8px; height: 8px; border: 0; border-radius: 50%; background: #0063b1; color: #fff; font-weight: bold; line-height: 8px; }
.ribbon { display: flex; height: 51px; background: #f5f6f7; border-bottom: 1px solid #dadbdc; padding: 2px 0 0; }
.group { display: flex; flex-direction: column; border-right: 1px solid #dcdee0; }
.g-clip { width: 170px; }
.g-org { width: 94px; }
.g-new { width: 48px; }
.g-open { width: 53px; }
.g-sel { width: 56px; }
.group .label { text-align: center; color: #555; }
.tools { display: flex; flex: 1; align-items: flex-start; }
.big { display: flex; flex-direction: column; align-items: center; text-align: center; padding-top: 3px; line-height: 8px; }
.big svg { margin-bottom: 2px; }
.big .i12 { margin: 2px 0 4px; }
.big .caret { margin: 0; }
.w-pin { width: 50px; }
.w-copy { width: 16px; }
.w-paste { width: 28px; }
.w-new { width: 29px; }
.w-prop { width: 30px; }
.stack { display: flex; flex-direction: column; }
.stack button { display: flex; align-items: center; gap: 1px; height: 12px; color: #444; }
.stack.dim button, .dim { color: #999; }
.dark { color: #333; }
.two { gap: 3px; padding: 3px 0 0 5px; }
.two .stack { gap: 4px; }
.address { display: flex; align-items: center; gap: 5px; height: 19px; padding: 0 8px 0 6px; }
.hist { display: flex; align-items: center; gap: 7px; width: 46px; color: #bbb; }
.hist .i8 + .caret { margin: 0 -3px; }
.path { display: flex; align-items: center; gap: 3px; width: 172px; height: 12px; border: 1px solid #d9d9d9; padding-left: 2px; }
.push { margin-left: auto; }
.reload { border-left: 1px solid #d9d9d9; width: 12px; height: 10px; padding-left: 1px; }
.find { display: flex; align-items: center; flex: 1; height: 12px; border: 1px solid #d9d9d9; padding: 0 3px; }
.find input { flex: 1; }
.find input::placeholder { color: #888; opacity: 1; }
.ex-body { display: flex; height: 205px; }
.tree { width: 129px; display: flex; flex-direction: column; }
.tree li { display: flex; flex: 1; align-items: center; gap: 3px; padding-left: 22px; }
.tree .root { padding-left: 17px; }
.vbar { flex: none; width: 8px; display: flex; flex-direction: column; background: #f0f0f0; padding: 2px 0; }
.vbar svg { width: 8px; height: 5px; }
.vbar i { background: #cdcdcd; }
.vbar svg:last-child { margin-top: auto; }
.hbar { flex: none; height: 9px; display: flex; align-items: center; background: #f0f0f0; padding: 0 2px; }
.hbar svg { width: 5px; height: 7px; }
.hbar i { height: 8px; margin-left: 2px; background: #cdcdcd; }
.hbar svg:last-child { margin-left: auto; }
.nav-bar i { margin-top: 86px; height: 33px; }
.pane { flex: 1; min-width: 0; display: flex; flex-direction: column; padding-right: 2px; }
.listing { flex: 1; min-height: 0; display: flex; }
.clip { flex: 1; min-width: 0; overflow: hidden; }
.files, .ftp { width: 100%; table-layout: fixed; border-collapse: collapse; }
th, td { padding: 0; overflow: hidden; white-space: nowrap; text-align: left; font-weight: normal; }
th:has(.sort) { position: relative; }
.sort { position: absolute; top: 0; left: 50%; width: 7px; height: 4px; }
td svg { display: inline-block; vertical-align: middle; margin-right: 3px; }
.files th { height: 18px; color: #5b7182; border-right: 1px solid #eee; padding-left: 4px; }
.files td { height: 11px; color: #888; padding-left: 5px; }
.files tbody tr:nth-child(4n) td { height: 12px; }
.files th:first-child, .files td:first-child { padding-left: 11px; color: #444; }
.files th:first-child { color: #5b7182; }
.files td:last-child { padding-left: 4px; }
.c-name { width: 147px; }
.c-date { width: 77px; }
.list-bar i { height: 174px; }
.ex-h i { width: 227px; }
.ex-foot { display: flex; align-items: center; height: 11px; padding: 0 4px 0 8px; color: #446; }
.view { width: 11px; height: 10px; padding-left: 1px; }
.ex-foot .on { margin-left: auto; background: #cce8ff; border: 1px solid #8cc8f0; }

/* FileZilla */
.zilla { left: 451px; top: 33px; width: 557px; background: #f0f0f0; }
.fz-title { display: flex; align-items: center; gap: 3px; height: 16px; padding: 0 8px 0 4px; background: #fff; color: #888; }
.menu { display: flex; gap: 6px; height: 10px; padding-left: 3px; background: #fff; color: #777; }
.toolbar { display: flex; align-items: center; gap: 3px; height: 16px; padding-left: 3px; border-bottom: 1px solid #ccc; }
.toolbar button { width: 11px; height: 11px; }
.toolbar button svg { width: 11px; height: 11px; }
.toolbar .bar { height: 12px; }
.pressed { display: flex; gap: 4px; background: #cbe6fa; padding: 1px 0; }
.quick { display: flex; align-items: center; gap: 2px; height: 18px; padding-left: 2px; border-bottom: 1px solid #888; }
.quick input { height: 12px; border: 1px solid #888; background: #fff; margin-right: 3px; }
.wide { width: 60px; }
.port { width: 26px; }
.go { width: 51px; height: 12px; border: 1px solid #0078d7; background: #e1e1e1; text-align: center; box-shadow: inset 0 0 0 1px #8cc4f0; }
.quick .drop { display: flex; align-items: center; justify-content: center; width: 11px; height: 12px; background: #ddd; border: 1px solid #bbb; }
.log { display: flex; justify-content: space-between; height: 92px; background: #fff; border: 1px solid #ccc; border-width: 0 1px 1px 0; }
.log dl { display: grid; grid-template-columns: 29px auto; grid-auto-rows: 11px; padding-left: 2px; line-height: 11px; }
.log b { font-weight: normal; font-feature-settings: normal; }
.log-bar i { margin-top: 68px; height: 9px; }
.split { display: grid; grid-template-columns: 214px 1fr; gap: 3px; padding-top: 5px; }
.side-pane { min-width: 0; display: flex; flex-direction: column; }
.site { display: flex; align-items: center; height: 13px; background: #fff; border: 1px solid #888; padding-right: 1px; }
.site label { align-self: stretch; width: 43px; line-height: 11px; padding-left: 1px; background: #e9e9e9; border-right: 1px solid #888; white-space: nowrap; }
.site input { flex: 1; padding-left: 1px; }
.dirs { display: flex; height: 40px; overflow: hidden; background: #fff; border-bottom: 1px solid #888; }
.dirs ul { flex: 1; }
.dirs li { display: flex; align-items: center; gap: 2px; height: 10px; }
.dirs .pm { width: 7px; height: 7px; }
i.pm { border-bottom: 1px solid #ccc; margin-bottom: 6px; }
.d1 { padding-left: 24px; }
.d2 { padding-left: 34px; background: linear-gradient(#ccc, #ccc) 27px 0 / 1px 100% no-repeat; }
.d3 { padding-left: 44px; background: linear-gradient(#ccc, #ccc) 27px 0 / 1px 100% no-repeat, linear-gradient(#ccc, #ccc) 37px 0 / 1px 100% no-repeat; }
.sel { background: #e8e8e8; }
.dir-bar i { margin-top: 12px; height: 9px; }
.rdir-bar i { margin-top: 4px; height: 9px; }
.box { display: flex; flex-direction: column; height: 136px; margin-top: 3px; background: #fff; border-top: 1px solid #888; }
.ftp th { height: 12px; border-right: 1px solid #eee; padding-left: 4px; }
.ftp td { height: 10px; padding-left: 4px; color: #444; }
.ftp td:first-child { padding-left: 2px; }
.ftp td:nth-child(2), .ftp th:nth-child(2) { text-align: right; padding-right: 3px; }
.ftp tbody tr:nth-child(5n) td { height: 11px; }
.c-size { width: 43px; }
.c-type { width: 44px; }
.c-rname { width: 193px; }
.l-bar i { height: 17px; }
.r-bar i { height: 50px; }
.l-h i { width: 135px; }
.r-h i { width: 192px; }
.sum { height: 13px; line-height: 12px; padding-left: 2px; border-bottom: 1px solid #ccc; }
.queue { display: flex; flex-direction: column; justify-content: space-between; height: 47px; margin-top: 1px; background: #fff; border: 1px solid #888; border-width: 1px 0; }
.q-head { display: flex; gap: 6px; line-height: 14px; padding-left: 4px; }
.q1 { width: 93px; border-right: 1px solid #eee; }
.q2 { width: 69px; text-align: center; border-right: 1px solid #eee; }
.q-h i { width: 297px; }
.q-tabs { display: flex; height: 14px; padding: 0 2px 2px; background: linear-gradient(#ddd, #f0f0f0); }
.q-tabs button { padding: 0 4px; border: 1px solid #bbb; border-top: 0; background: #e8e8e8; }
.q-tabs .on { width: 66px; text-align: left; background: #fff; }
.fz-foot { display: flex; align-items: center; gap: 2px; height: 12px; padding: 0 11px 0 434px; }
.fz-foot span { margin-right: auto; padding-left: 3px; }
.led { width: 6px; height: 6px; border-radius: 50%; }
.green { background: radial-gradient(#5c8, #253 70%); }
.red { background: radial-gradient(#c55, #522 70%); }

/* Annotations */
.frame { position: absolute; border: 3px solid; }
.frame-blue { left: 144px; top: 227px; width: 282px; height: 176px; border-color: #00a2e8; box-shadow: inset 1px 0 #e0343c, 0 1px #e0343c; }
.frame-green { left: 666px; top: 187px; width: 221px; height: 17px; border-color: #0cac48; }
.frame-red { left: 668px; top: 268px; width: 192px; height: 106px; border-color: #ed1c24; }
.arrow { position: absolute; left: 407px; top: 323px; width: 296px; height: 34px; }
.note { position: absolute; left: 75px; top: 423px; width: 377px; padding: 13px 13px 6px; background: #00a2e8; color: #fff; font-size: 12px; line-height: 22px; white-space: nowrap; }
```
